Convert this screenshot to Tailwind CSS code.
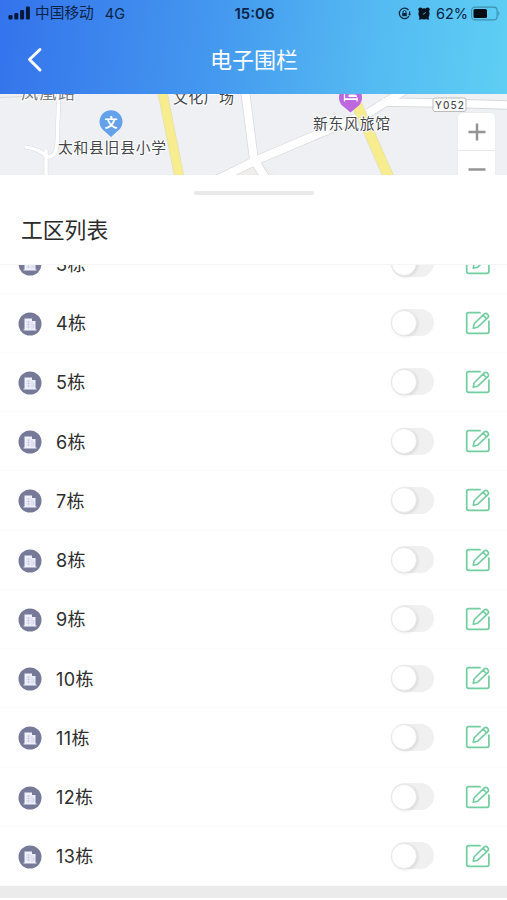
<!DOCTYPE html>
<html lang="zh-CN">
<head>
<meta charset="utf-8">
<meta name="viewport" content="width=device-width, initial-scale=1">
<title>电子围栏</title>
<script src="https://cdn.jsdelivr.net/npm/@tailwindcss/browser@4"></script>
</head>
<body class="bg-white">
<svg class="hidden">
  <symbol id="building" viewBox="0 0 24 24">
    <circle cx="12" cy="12" r="11.5" fill="#777998"/>
    <path d="M6.5 6.500h7.500v2.500h3.500v8.500h1v1H5.500v-1h1z" fill="#eef0fb"/>
    <path d="M8.5 10h4M8.5 12.5h4M8.5 15h4M10.5 9v7.500M14 10v7M15.800 12v4" stroke="#c3c5de" stroke-width=".7" fill="none"/>
  </symbol>
  <symbol id="edit" viewBox="0 0 26 24">
    <g fill="none" stroke="#72cd9f" stroke-width="1.7" stroke-linejoin="round" stroke-linecap="round">
      <path d="M15 1.700H3.600Q1.700 1.700 1.700 3.600V20.400Q1.700 22.300 3.600 22.300H22Q23.900 22.300 23.900 20.400V10"/>
      <path d="M8.200 17.200L9.200 12.700L19.300 2.900Q20.900 1.700 22.600 3.200Q24.300 5 22.900 6.700L12.700 16.200Z M18.200 4.200L21.500 7.700" stroke-width="1.600"/>
    </g>
  </symbol>
</svg>
<div class="flex h-[900px] w-[507px] flex-col overflow-hidden bg-white font-['Inter','Noto_Sans_CJK_SC',sans-serif]">
  <header class="flex h-[94px] shrink-0 flex-col bg-linear-[97deg,#3473ec_0%,#4498ef_42%,#54b9f2_72%,#5ecff4_100%]">
    <div class="grid h-[27px] grid-cols-3 items-center pr-[6px] pl-[8px] text-[14px] text-[#0c2346]">
      <div class="flex items-center">
        <svg class="mr-[5px]" width="22" height="14" viewBox="0 0 22 14" fill="#08183a"><rect x=".5" y="9" width="4" height="4.5" rx="1.2"/><rect x="6.3" y="7" width="4" height="6.5" rx="1.2"/><rect x="12.1" y="4" width="4" height="9.5" rx="1.2"/><rect x="17.9" y="0.5" width="4" height="13" rx="1.2"/></svg>
        <span class="text-[14.700px]">中国移动</span><span class="ml-[11px] text-[14.5px]">4G</span>
      </div>
      <div class="pt-px text-center text-[15px] font-semibold">15:06</div>
      <div class="flex items-center justify-end">
        <svg class="mr-[7px]" width="13" height="13" viewBox="0 0 13 13" fill="none" stroke="#10293f" stroke-width="1.3"><path d="M10.5 3A5.2 5.2 0 1 0 11 9.1"/><path d="M11.6 4.5v3.2"/><path d="M10 7l1.6 1.8L13 7z" fill="#10293f" stroke="none"/><rect x="4.2" y="6" width="4.6" height="3.2" fill="#10293f" stroke="none"/><path d="M5 6.3V5a1.5 1.5 0 0 1 3 0v1.3" stroke-width="1"/></svg>
        <svg class="mr-[6px]" width="12" height="13" viewBox="0 0 12 13"><g fill="#08131f"><circle cx="6" cy="6.8" r="5.600"/><circle cx="2.4" cy="2.500" r="2.100"/><circle cx="9.6" cy="2.500" r="2.100"/><path d="M2 9L.8 12.600h3zM10 9l1.200 3.600H8.200z"/></g><path d="M6.200 7L7.600 5M6.200 7H4.800" stroke="#6c9ab5" stroke-width=".9" fill="none"/></svg>
        <span class="mr-[3px] text-[14.500px]">62%</span>
        <svg width="30" height="15" viewBox="0 0 30 15"><rect x=".6" y="1.100" width="25.500" height="12.800" rx="3.500" fill="none" stroke="#3c8fae" stroke-width="1.100"/><rect x="2.500" y="3" width="13.500" height="9" rx="1.500" fill="#030b12"/><path d="M27.300 5q2.300 2.500 0 5z" fill="#3c8fae"/></svg>
      </div>
    </div>
    <div class="grid h-[67px] grid-cols-[1fr_auto_1fr] items-center pb-[1px] text-white">
      <svg class="ml-[26px]" width="18" height="26" viewBox="0 0 18 26" fill="none" stroke="white" stroke-width="3" stroke-linecap="round" stroke-linejoin="round"><path d="M14 2.500L3.500 12.500l10.500 10.500"/></svg>
      <h1 class="pl-[1px] text-[22px] leading-[30px]">电子围栏</h1>
    </div>
  </header>

  <section class="relative h-[81px] shrink-0 overflow-hidden bg-[#eff0f3]">
    <svg class="block" width="507" height="81" viewBox="0 94 507 81" fill="none">
      <path d="M232 175L262 163L276 175z" fill="#f0eeeb"/>
      <g stroke="#d8d9dc">
        <path d="M0 97.500L58 95" stroke-width="1"/>
        <path d="M59 94L57 145Q56 157 47 157Q40 149 25 147M46 150V180" stroke-width="4.500"/>
        <path d="M245 90L254 160L268 182M212 182L257 160L370 112L405 90M384 102L440 103L507 105" stroke-width="9.500"/>
      </g>
      <g stroke="#fff">
        <path d="M59 90L57 145Q56 157 47 157Q40 149 25 147M46 150V180" stroke-width="3.500"/>
        <path d="M245 90L254 160L268 182M212 182L257 160L370 112L405 90" stroke-width="8"/>
        <path d="M382 102L440 103L507 105" stroke-width="7.500"/>
      </g>
      <path d="M162 90L180 180" stroke="#e5dfae" stroke-width="10"/>
      <path d="M162 90L180 180" stroke="#f7ec8e" stroke-width="8.500"/>
      <path d="M357 105L390 180" stroke="#e5dfae" stroke-width="11"/>
      <path d="M357 105L390 180" stroke="#f7ec8e" stroke-width="9.500"/>
      <path d="M111 137L105 131.500A11.500 11.500 0 1 1 117 131.500Z" fill="#63a1ea"/>
      <path d="M350.500 112.500L344 107A11.500 11.500 0 1 1 357 107Z" fill="#bd68df"/>
      <path d="M344.500 93v8.500M357 101.500v-4" stroke="#fff" stroke-width="1.300"/>
      <path d="M344 98.300h13.500v1.700H344zM348.500 94.500h6.500q2 0 2 2v.6h-8.500z" fill="#fff"/>
      <g font-family="Noto Sans CJK SC, sans-serif" fill="#45474b" stroke="#fff" stroke-width="2" paint-order="stroke">
        <text x="21" y="99" font-size="17" textLength="54" fill="#777a80">凤凰路</text>
        <text x="173" y="102.500" font-size="15" textLength="61">文化广场</text>
        <text x="58" y="153" font-size="14.800" textLength="108">太和县旧县小学</text>
        <text x="313" y="128.500" font-size="14.800" textLength="77">新东风旅馆</text>
        <text x="104.500" y="127" font-size="13" font-weight="700" fill="#fff" stroke="none">文</text>
      </g>
      <rect x="433" y="98" width="33" height="13.500" rx="2" fill="#fff" stroke="#b9bbbe"/>
      <text x="435" y="108.500" font-family="Inter, sans-serif" font-weight="500" font-size="10" textLength="29" fill="#4c4e52">Y052</text>
    </svg>
    <div class="absolute top-[19px] left-[458px] flex h-[76px] w-[37px] flex-col rounded-[5px] bg-white shadow-[0_0_2px_#0000000d]">
      <div class="flex h-[38px] items-center justify-center border-b border-[#e8e8e8]"><svg width="18" height="18" viewBox="0 0 18 18" stroke="#949494" stroke-width="2.500"><path d="M.5 9h17M9 .5v17"/></svg></div>
      <div class="flex h-[38px] items-center justify-center"><svg width="18" height="18" viewBox="0 0 18 18" stroke="#949494" stroke-width="2.500"><path d="M.5 8.500h17"/></svg></div>
    </div>
  </section>

  <section class="flex h-[90px] shrink-0 flex-col border-b border-[#f5f5f5]">
    <div class="mx-auto mt-[16px] h-[4px] w-[120px] rounded-full bg-[#e9e9e9]"></div>
    <h2 class="mt-[19px] ml-[21px] text-[21.800px] leading-[33px] text-[#2b2b2b]">工区列表</h2>
  </section>

  <main id="list" class="flex h-[621px] shrink-0 flex-col justify-end overflow-hidden"></main>
  <footer class="h-[12px] shrink-0 bg-[#ebebeb]"></footer>
</div>
<script>
  const list = document.getElementById('list');
  for (let n = 3; n <= 13; n++) {
    list.insertAdjacentHTML('beforeend', `
      <div class="flex h-[59.25px] shrink-0 items-center border-b border-[#fcfcfc] pr-[16px] pl-[18px]">
        <svg class="mt-[2px] size-[24px]"><use href="#building"/></svg>
        <span class="ml-[14px] flex-1 pt-[3px] text-[18px] leading-[26px] tracking-[0.4px] text-[#2e2e2e]">${n}栋</span>
        <span class="mr-[31px] flex h-[27px] w-[43.5px] items-center rounded-full bg-[#f0f0f0]"><i class="block size-[26px] rounded-full border border-[#e8e8e8] bg-white shadow-[1px_1px_3px_#0000001a]"></i></span>
        <svg class="h-[24px] w-[26px]"><use href="#edit"/></svg>
      </div>`);
  }
</script>
</body>
</html>
